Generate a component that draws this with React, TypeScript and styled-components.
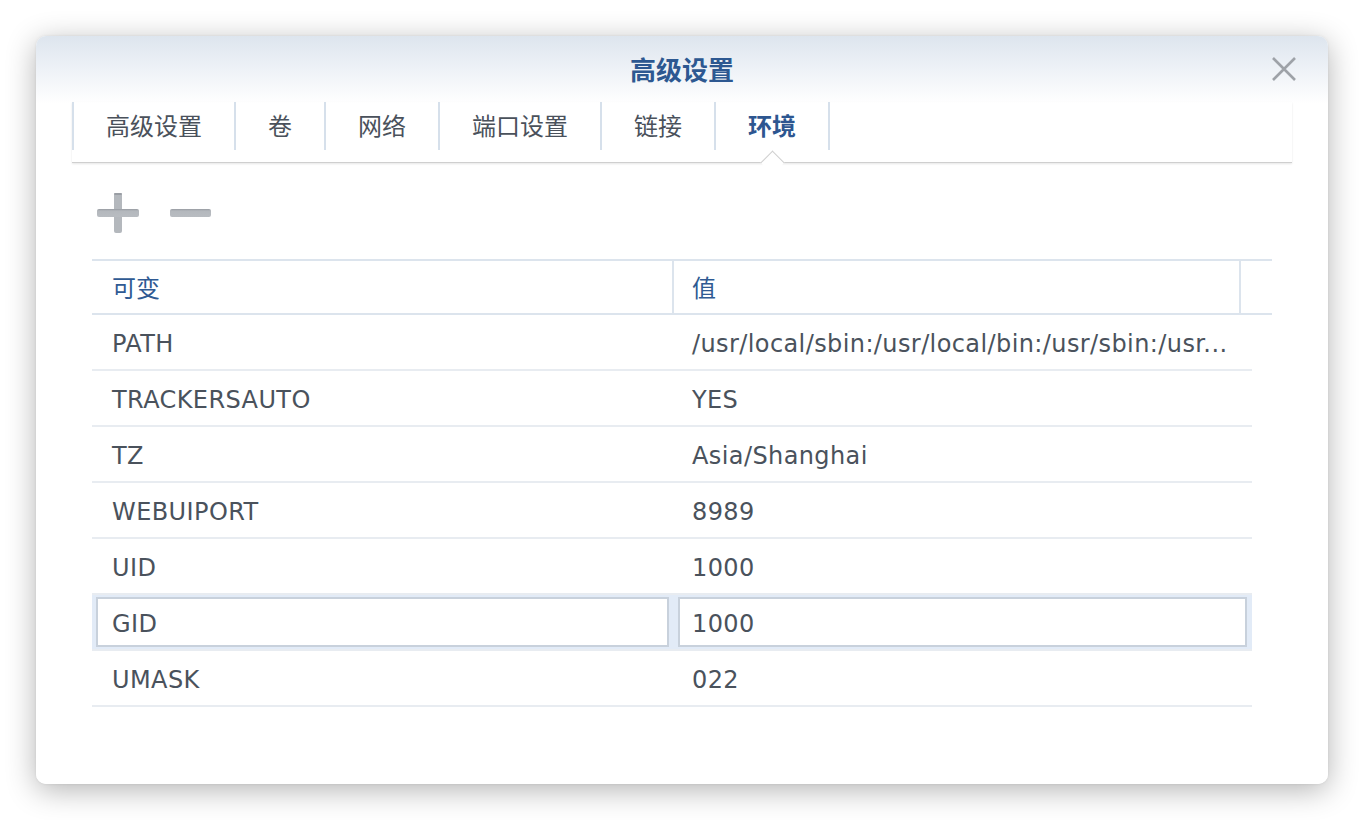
import React from "react";
import styled, { createGlobalStyle, css } from "styled-components";

const GlobalStyle = createGlobalStyle`
  html, body { margin: 0; padding: 0; background: #ffffff; }
  body { font-family: "DejaVu Sans", "Noto Sans CJK SC", sans-serif; }
  * { box-sizing: border-box; }
`;

const Page = styled.div`
  width: 1364px;
  height: 820px;
  padding: 36px;
`;

const Dialog = styled.div`
  position: relative;
  width: 1292px;
  height: 748px;
  border-radius: 10px;
  background: linear-gradient(to bottom, #dde5ee 0px, #eef2f7 34px, #ffffff 68px, #ffffff 100%);
  box-shadow: 0 6px 30px rgba(0, 0, 0, 0.3), 0 0 3px rgba(0, 0, 0, 0.08);
  display: flex;
  flex-direction: column;
  padding: 0 36px;
`;

const Header = styled.div`
  height: 66px;
  display: flex;
  align-items: center;
  justify-content: center;
`;

const Title = styled.div`
  font-family: "Noto Sans CJK SC", sans-serif;
  font-weight: 700;
  font-size: 26px;
  line-height: 1;
  color: #2d5891;
`;

const CloseButton = styled.button`
  position: absolute;
  top: 21px;
  right: 31px;
  width: 26px;
  height: 24px;
  padding: 0;
  border: none;
  background: transparent;
  display: flex;
  align-items: center;
  justify-content: center;
  cursor: pointer;
`;

const TabBar = styled.div`
  display: flex;
  height: 61px;
  padding-bottom: 12px;
  border-bottom: 1px solid #cfcfcf;
  box-shadow: 0 1px 2px rgba(0, 0, 0, 0.1);
`;

const Tab = styled.div<{ $active?: boolean }>`
  position: relative;
  height: 48px;
  padding: 0 32px 2px;
  border-left: 2px solid #d6e0eb;
  display: flex;
  align-items: center;
  font-family: "Noto Sans CJK SC", sans-serif;
  font-size: 24px;
  line-height: 1;
  color: #4a515b;
  &:last-child {
    border-right: 2px solid #d6e0eb;
  }
  ${(p) =>
    p.$active &&
    css`
      color: #2d5690;
      font-weight: 700;
      &::after {
        content: "";
        position: absolute;
        left: calc(50% - 8px);
        bottom: -21px;
        width: 16px;
        height: 16px;
        background: #ffffff;
        border-top: 1px solid #cfcfcf;
        border-left: 1px solid #cfcfcf;
        transform: rotate(45deg);
      }
    `}
`;

const Toolbar = styled.div`
  display: flex;
  align-items: center;
  gap: 31px;
  margin-top: 30px;
  padding-left: 25px;
  height: 40px;
`;

const ToolButton = styled.button`
  padding: 0;
  border: none;
  background: transparent;
  display: flex;
  align-items: center;
  cursor: pointer;
`;

const Table = styled.div`
  margin-top: 26px;
  margin-left: 20px;
  width: 1180px;
`;

const HeaderRow = styled.div`
  display: grid;
  grid-template-columns: 582px 567px 1fr;
  height: 56px;
  border-top: 2px solid #dce4ed;
  border-bottom: 2px solid #dce4ed;
`;

const HeaderCell = styled.div<{ $first?: boolean; $divider?: boolean }>`
  display: flex;
  align-items: center;
  padding-top: 4px;
  padding-left: ${(p) => (p.$first ? "20px" : "18px")};
  border-right: ${(p) => (p.$divider ? "2px solid #dce4ed" : "none")};
  font-family: "DejaVu Sans", "Noto Sans CJK SC", sans-serif;
  font-size: 24px;
  line-height: 1;
  color: #2f5a93;
`;

const Row = styled.div<{ $selected?: boolean }>`
  display: grid;
  grid-template-columns: 582px 578px;
  width: 1160px;
  height: 56px;
  border-bottom: 2px solid #e8ecf1;
  background: ${(p) => (p.$selected ? "#e2ebf7" : "transparent")};
`;

const Cell = styled.div`
  display: flex;
  min-width: 0;
  padding: 2px 5px 2px 4px;
`;

const CellBox = styled.div<{ $first?: boolean; $selected?: boolean }>`
  flex: 1;
  min-width: 0;
  display: flex;
  align-items: center;
  padding-top: 4px;
  padding-left: ${(p) => (p.$first ? "14px" : "12px")};
  border: 2px solid ${(p) => (p.$selected ? "#c8d1dc" : "transparent")};
  background: ${(p) => (p.$selected ? "#ffffff" : "transparent")};
  font-size: 24px;
  letter-spacing: 0.4px;
  line-height: 1.2;
  color: #4a525c;
  white-space: nowrap;
`;

const tabs = ["高级设置", "卷", "网络", "端口设置", "链接", "环境"];

const rows: { name: string; value: string }[] = [
  { name: "PATH", value: "/usr/local/sbin:/usr/local/bin:/usr/sbin:/usr..." },
  { name: "TRACKERSAUTO", value: "YES" },
  { name: "TZ", value: "Asia/Shanghai" },
  { name: "WEBUIPORT", value: "8989" },
  { name: "UID", value: "1000" },
  { name: "GID", value: "1000" },
  { name: "UMASK", value: "022" },
];

const PlusIcon = () => (
  <svg width="42" height="40" viewBox="0 0 42 40">
    <defs>
      <linearGradient id="pg" x1="0" y1="0" x2="0" y2="1">
        <stop offset="0" stopColor="#979ba1" />
        <stop offset="0.25" stopColor="#b4b8bd" />
        <stop offset="1" stopColor="#b8bcc1" />
      </linearGradient>
    </defs>
    <rect x="17" y="0" width="8" height="40" rx="2" fill="#b4b8bd" />
    <rect x="17" y="0" width="8" height="2" rx="1" fill="#9a9ea4" />
    <rect x="0" y="16" width="42" height="8" rx="2" fill="url(#pg)" />
  </svg>
);

const MinusIcon = () => (
  <svg width="41" height="8" viewBox="0 0 41 8">
    <defs>
      <linearGradient id="mg" x1="0" y1="0" x2="0" y2="1">
        <stop offset="0" stopColor="#979ba1" />
        <stop offset="0.25" stopColor="#b4b8bd" />
        <stop offset="1" stopColor="#b8bcc1" />
      </linearGradient>
    </defs>
    <rect x="0" y="0" width="41" height="8" rx="2" fill="url(#mg)" />
  </svg>
);

const CloseIcon = () => (
  <svg width="26" height="24" viewBox="0 0 26 24">
    <path d="M2 1 L24 23 M24 1 L2 23" stroke="#9ea2a8" strokeWidth="2.6" strokeLinecap="butt" />
  </svg>
);

export default function App() {
  return (
    <>
      <GlobalStyle />
      <Page>
        <Dialog>
          <Header>
            <Title>高级设置</Title>
          </Header>
          <CloseButton aria-label="关闭">
            <CloseIcon />
          </CloseButton>
          <TabBar>
            {tabs.map((t, i) => (
              <Tab key={t + i} $active={i === tabs.length - 1}>
                {t}
              </Tab>
            ))}
          </TabBar>
          <Toolbar>
            <ToolButton aria-label="新增">
              <PlusIcon />
            </ToolButton>
            <ToolButton aria-label="删除">
              <MinusIcon />
            </ToolButton>
          </Toolbar>
          <Table>
            <HeaderRow>
              <HeaderCell $first $divider>可变</HeaderCell>
              <HeaderCell $divider>值</HeaderCell>
              <HeaderCell />
            </HeaderRow>
            {rows.map((r) => {
              const sel = r.name === "GID";
              return (
                <Row key={r.name} $selected={sel}>
                  <Cell>
                    <CellBox $first $selected={sel}>
                      {r.name}
                    </CellBox>
                  </Cell>
                  <Cell>
                    <CellBox $selected={sel}>{r.value}</CellBox>
                  </Cell>
                </Row>
              );
            })}
          </Table>
        </Dialog>
      </Page>
    </>
  );
}
